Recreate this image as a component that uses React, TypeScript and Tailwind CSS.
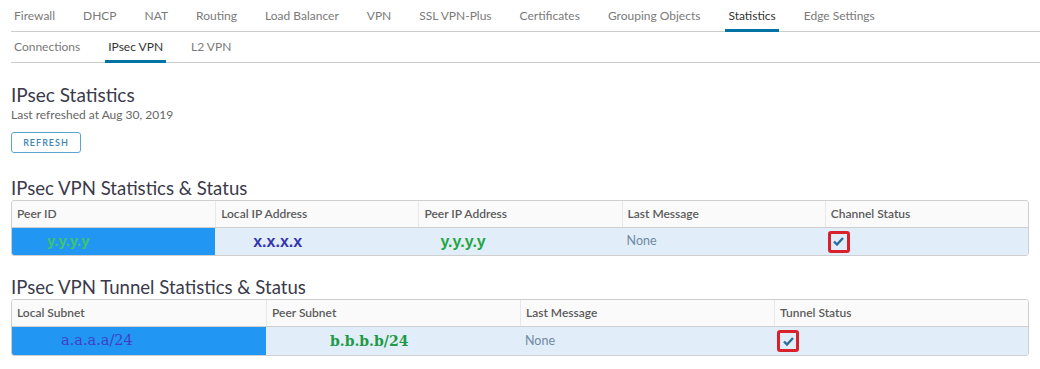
import React from 'react';

const mainTabs = [
  'Firewall',
  'DHCP',
  'NAT',
  'Routing',
  'Load Balancer',
  'VPN',
  'SSL VPN-Plus',
  'Certificates',
  'Grouping Objects',
  'Statistics',
  'Edge Settings',
];

const subTabs = ['Connections', 'IPsec VPN', 'L2 VPN'];

function TabBar({ tabs, active, height }: { tabs: string[]; active: string; height: string }) {
  return (
    <div className={`ml-[11px] flex items-stretch gap-[22px] border-b border-[#cccccc] ${height}`}>
      {tabs.map((tab) => (
        <div
          key={tab}
          className={
            tab === active
              ? 'flex items-center px-[3px] border-b-[3px] border-[#0072a3] text-[#333] -mb-px pt-[2px]'
              : 'flex items-center px-[3px] border-b-[3px] border-transparent text-[#7a7a7a] -mb-px pt-[2px]'
          }
        >
          {tab}
        </div>
      ))}
    </div>
  );
}

function CheckBox() {
  return (
    <span className="inline-flex items-center justify-center w-[22px] h-[22px] border-[3px] border-[#d9212b] rounded-[3px]">
      <svg width="11" height="9" viewBox="0 0 11 9">
        <path d="M1 4.5 L4 7.5 L10 1" fill="none" stroke="#2e6c9e" strokeWidth="2.4" />
      </svg>
    </span>
  );
}

function Table({
  cols,
  rowHeight,
  children,
}: {
  cols: string[];
  rowHeight: string;
  children: React.ReactNode;
}) {
  const grid = cols.length === 5 ? 'grid-cols-5' : 'grid-cols-4';
  return (
    <div className="mx-[11px] border border-[#cfcfcf] rounded-[3px] overflow-hidden">
      <div className={`grid ${grid} h-[27px] bg-[#fafafa] border-b border-[#cfcfcf]`}>
        {cols.map((c, i) => (
          <div
            key={c}
            className={`flex items-center pl-[5px] text-[12px] font-semibold text-[#5a5a5a] ${i > 0 ? 'border-l border-[#e8e8e8]' : ''}`}
          >
            {c}
          </div>
        ))}
      </div>
      <div className={`grid ${grid} ${rowHeight} bg-[#e1edf8]`}>{children}</div>
    </div>
  );
}

export default function App() {
  return (
    <div className="w-[1040px] h-[369px] bg-white overflow-hidden" style={{ fontFamily: 'Lato, "Open Sans", sans-serif' }}>
      <div className="text-[12px]">
        <TabBar tabs={mainTabs} active="Statistics" height="h-[32px]" />
        <TabBar tabs={subTabs} active="IPsec VPN" height="h-[31px]" />
      </div>

      <div className="pl-[11px] pt-[20px]">
        <h1 className="text-[19px] leading-[24px] text-[#3a3a4a] font-normal">IPsec Statistics</h1>
        <p className="text-[12px] leading-[14px] mt-[1px] text-[#666]">Last refreshed at Aug 30, 2019</p>
        <button className="mt-[10px] w-[70px] h-[21px] border border-[#5aa5cf] rounded-[3px] text-[9px] font-semibold tracking-[1px] text-[#3d87b5]">
          REFRESH
        </button>
        <h2 className="mt-[25px] text-[18.6px] leading-[20px] text-[#3a3a4a] font-normal">
          IPsec VPN Statistics &amp; Status
        </h2>
      </div>

      <div className="mt-[2px]">
        <Table
          rowHeight="h-[27px]"
          cols={['Peer ID', 'Local IP Address', 'Peer IP Address', 'Last Message', 'Channel Status']}
        >
          <div className="flex items-center bg-[#2196f3] pl-[35px] text-[15px] font-bold text-[#3ec769]" style={{ fontFamily: '"Liberation Sans", sans-serif' }}>
            y.y.y.y
          </div>
          <div className="flex items-center pl-[38px] text-[16px] font-bold text-[#3434b2]" style={{ fontFamily: '"Liberation Sans", sans-serif' }}>
            x.x.x.x
          </div>
          <div className="flex items-center pl-[22px] text-[16px] font-bold text-[#1fa643]" style={{ fontFamily: '"Liberation Sans", sans-serif' }}>
            y.y.y.y
          </div>
          <div className="flex items-center pl-[5px] text-[12.5px] text-[#6f8aa3]">None</div>
          <div className="flex items-center pl-[3px]">
            <CheckBox />
          </div>
        </Table>
      </div>

      <h2 className="pl-[11px] mt-[21px] text-[18.6px] leading-[20px] text-[#3a3a4a] font-normal">
        IPsec VPN Tunnel Statistics &amp; Status
      </h2>

      <div className="mt-[2px]">
        <Table rowHeight="h-[28px]" cols={['Local Subnet', 'Peer Subnet', 'Last Message', 'Tunnel Status']}>
          <div className="flex items-center bg-[#2196f3] pl-[49px] text-[14.5px] text-[#4141c4]" style={{ fontFamily: '"DejaVu Serif", serif' }}>
            a.a.a.a/24
          </div>
          <div className="flex items-center pl-[64px] text-[14px] font-bold text-[#1f9a45]" style={{ fontFamily: '"DejaVu Serif", serif' }}>
            b.b.b.b/24
          </div>
          <div className="flex items-center pl-[5px] text-[12.5px] text-[#6f8aa3]">None</div>
          <div className="flex items-center pl-[3px]">
            <CheckBox />
          </div>
        </Table>
      </div>
    </div>
  );
}
